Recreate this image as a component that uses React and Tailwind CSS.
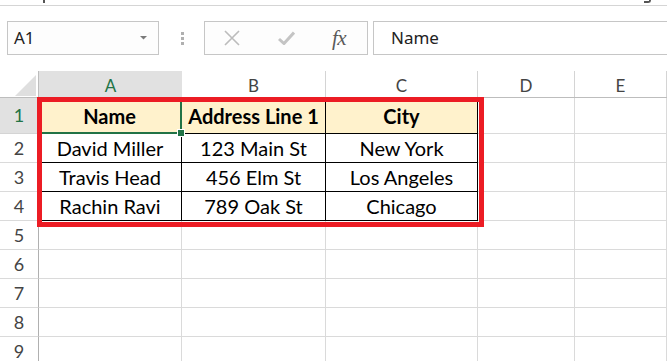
import React from "react";

const cols = [
  { key: "A", w: "w-[143px]" },
  { key: "B", w: "w-[144px]" },
  { key: "C", w: "w-[152px]" },
  { key: "D", w: "w-[97px]" },
  { key: "E", w: "flex-1" },
];

const data = [
  ["Name", "Address Line 1", "City"],
  ["David Miller", "123 Main St", "New York"],
  ["Travis Head", "456 Elm St", "Los Angeles"],
  ["Rachin Ravi", "789 Oak St", "Chicago"],
];

function Cell({ r, c, text }) {
  const inTable = r < 4 && c < 3;
  const isHeader = r === 0 && c < 3;
  const isSel = r === 0 && c === 0;
  const col = cols[c];
  let border = "border-r border-b border-[#dadada]";
  if (inTable) border = "border-r border-b border-black";
  if (isSel) border = "border-r-2 border-b-2 border-[#217346]";
  return (
    <div
      className={`${col.w} ${border} ${isHeader ? "bg-[#fff2cc] font-bold pt-[1px]" : "bg-white"} relative flex items-center justify-center shrink-0 text-[20px] text-black whitespace-nowrap`}
    >
      {text}
      {isSel && (
        <span className="absolute right-[-5px] bottom-[-5px] w-[8px] h-[8px] bg-[#217346] border border-white z-10" />
      )}
    </div>
  );
}

export default function App() {
  const rows = [0, 1, 2, 3, 4, 5, 6, 7, 8];
  return (
    <div className="w-[667px] h-[361px] overflow-hidden bg-white relative font-['Lato',sans-serif]">
      {/* top strip */}
      <div className="h-[6px] border-b border-[#d5d5d5] relative overflow-hidden">
        <span className="absolute left-[43px] top-0 w-[2px] h-[3px] bg-[#555]" />
        <span className="absolute left-[644px] top-0 w-[7px] h-[3px] border-b-2 border-r-2 border-[#555] rounded-br-[4px]" />
      </div>

      {/* formula bar */}
      <div className="flex items-stretch pt-[15px] pb-[16px]">
        <div className="ml-[7px] w-[152px] h-[34px] shrink-0 border border-[#c6c6c6] bg-[#fdfdfd] flex items-center justify-between pl-[6px] pr-[11px] font-['Noto_Sans',sans-serif] text-[17px] text-[#222]">
          <span>A1</span>
          <svg width="7" height="4" viewBox="0 0 7 4">
            <polygon points="0,0 7,0 3.5,3.5" fill="#7a7a7a" />
          </svg>
        </div>
        <div className="w-[45px] shrink-0 flex flex-col items-center justify-center gap-[2px] pl-[1px]">
          <span className="w-[3px] h-[3px] bg-[#b0b0b0]" />
          <span className="w-[3px] h-[3px] bg-[#b0b0b0]" />
          <span className="w-[3px] h-[3px] bg-[#b0b0b0]" />
        </div>
        <div className="w-[164px] h-[34px] shrink-0 border border-[#c6c6c6] bg-[#fdfdfd] flex items-center">
          <svg className="ml-[19px] shrink-0" width="16" height="16" viewBox="0 0 16 16">
            <path d="M1 1 L15 15 M15 1 L1 15" stroke="#bcbcbc" strokeWidth="1.6" fill="none" />
          </svg>
          <svg className="ml-[38px] shrink-0" width="17" height="14" viewBox="0 0 17 14">
            <path d="M1 8 L6 12.5 L16 1.5" stroke="#c4c4c4" strokeWidth="3" fill="none" strokeLinejoin="miter" />
          </svg>
          <span className="ml-[37px] font-['Liberation_Serif',serif] italic text-[21px] text-[#5a5a5a] leading-none tracking-[-0.5px]">
            fx
          </span>
        </div>
        <div className="ml-[5px] w-[400px] h-[34px] shrink-0 border border-[#c6c6c6] bg-white flex items-center pl-[17px] font-['Noto_Sans',sans-serif] text-[17px] text-[#222]">
          Name
        </div>
      </div>

      {/* column header */}
      <div className="flex h-[27px] border-b border-[#bdbdbd]">
        <div className="w-[39px] shrink-0 border-r border-[#bdbdbd] bg-white relative">
          <svg className="absolute left-[15px] top-[4px]" width="21" height="21" viewBox="0 0 21 21">
            <polygon points="21,0 21,21 0,21" fill="#dfdfdf" />
          </svg>
        </div>
        {cols.map((c, i) => (
          <div
            key={c.key}
            className={`${c.w} shrink-0 flex items-center justify-center pt-[3px] text-[17px] ${
              i === 0 ? "bg-[#e1e1e1] text-[#217346]" : "bg-white text-[#444] border-r border-[#d4d4d4]"
            }`}
          >
            {c.key}
          </div>
        ))}
      </div>

      {/* rows */}
      {rows.map((r) => (
        <div key={r} className={`flex ${r === 0 ? "h-[36px]" : "h-[29px]"}`}>
          <div
            className={`w-[39px] shrink-0 border-r border-[#b0b0b0] border-b flex items-center justify-center text-[18px] ${
              r === 0 ? "bg-[#e1e1e1] text-[#217346] border-b-[#d4d4d4]" : "bg-white text-[#444] border-b-[#dadada]"
            }`}
          >
            {r + 1}
          </div>
          {cols.map((c, ci) => (
            <Cell key={c.key} r={r} c={ci} text={r < 4 && ci < 3 ? data[r][ci] : ""} />
          ))}
        </div>
      ))}

      {/* red highlight box */}
      <div className="absolute left-[37px] top-[97px] w-[447px] h-[130px] border-[5px] border-[#ec1c24] pointer-events-none" />
    </div>
  );
}
